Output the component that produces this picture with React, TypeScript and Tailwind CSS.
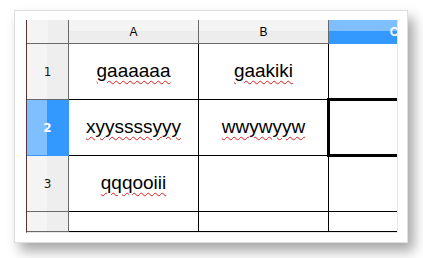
import React from "react";

const rows = [
  { n: "1", a: "gaaaaaa", b: "gaakiki" },
  { n: "2", a: "xyyssssyyy", b: "wwywyyw" },
  { n: "3", a: "qqqooiii", b: "" },
  { n: "", a: "", b: "" },
];

const Misspelled = ({ text }: { text: string }) => (
  <span className="underline decoration-wavy decoration-[#e01b1b] decoration-1 underline-offset-[3px]">
    {text}
  </span>
);

export default function App() {
  return (
    <div className="w-[423px] h-[258px] bg-white pt-[10px] pl-[14px]">
      <div className="w-[394px] h-[233px] bg-white border border-[#dedede] pl-[11px] pt-[9px] shadow-[6px_8px_12px_rgba(0,0,0,0.35)]">
        <div className="w-[372px] h-[213px] flex border-l border-l-[#5a3434] border-r border-r-[#e6e6e6] border-b border-b-[#e6e6e6] overflow-hidden">
          <div className="w-[370px] overflow-hidden">
            <div className="grid grid-cols-[42px_130px_130px_130px] grid-rows-[24px_56px_56px_56px_20px] w-[432px] font-['Liberation_Sans',Arial,sans-serif] text-black">
              {/* header row */}
              <div className="border-r border-b border-[#6a6a6a] bg-[linear-gradient(to_right,#f4f4f4_50%,#eeeeee_50%)]" />
              <div className="flex items-center justify-center border-r border-b border-[#6a6a6a] bg-[linear-gradient(to_bottom,#f4f4f4_48%,#ededed_48%)] text-[12px] pt-[1px]">
                A
              </div>
              <div className="flex items-center justify-center border-r border-b border-[#6a6a6a] bg-[linear-gradient(to_bottom,#f4f4f4_48%,#ededed_48%)] text-[12px] pt-[1px]">
                B
              </div>
              <div className="flex items-center justify-center border-b border-[#3399ff] bg-[linear-gradient(to_bottom,#80bfff_46%,#3399ff_46%)] text-[12px] font-bold text-white pt-[1px]">
                C
              </div>

              {rows.map((r) => {
                const sel = r.n === "2";
                return (
                  <React.Fragment key={r.n || "x"}>
                    <div
                      className={
                        sel
                          ? "flex items-center justify-center border-r border-b border-[#3399ff] bg-[linear-gradient(to_right,#80bfff_48%,#3399ff_48%)] font-['DejaVu_Sans',sans-serif] text-[12px] font-bold text-white"
                          : "flex items-center justify-center border-r border-b border-[#6a6a6a] bg-[linear-gradient(to_right,#f4f4f4_48%,#eeeeee_48%)] font-['DejaVu_Sans',sans-serif] text-[12px] text-[#1a1a1a]"
                      }
                    >
                      {r.n}
                    </div>
                    <div className="flex items-center justify-center border-r border-b border-black text-[19px] leading-none pb-[2px]">
                      {r.a && <Misspelled text={r.a} />}
                    </div>
                    <div className="flex items-center justify-center border-r border-b border-black text-[19px] leading-none pb-[2px]">
                      {r.b && <Misspelled text={r.b} />}
                    </div>
                    <div className="relative border-b border-black">
                      {sel && (
                        <div className="absolute -top-[2px] -left-[2px] -bottom-[2px] right-0 border-[3px] border-black" />
                      )}
                    </div>
                  </React.Fragment>
                );
              })}
            </div>
          </div>
        </div>
      </div>
    </div>
  );
}
